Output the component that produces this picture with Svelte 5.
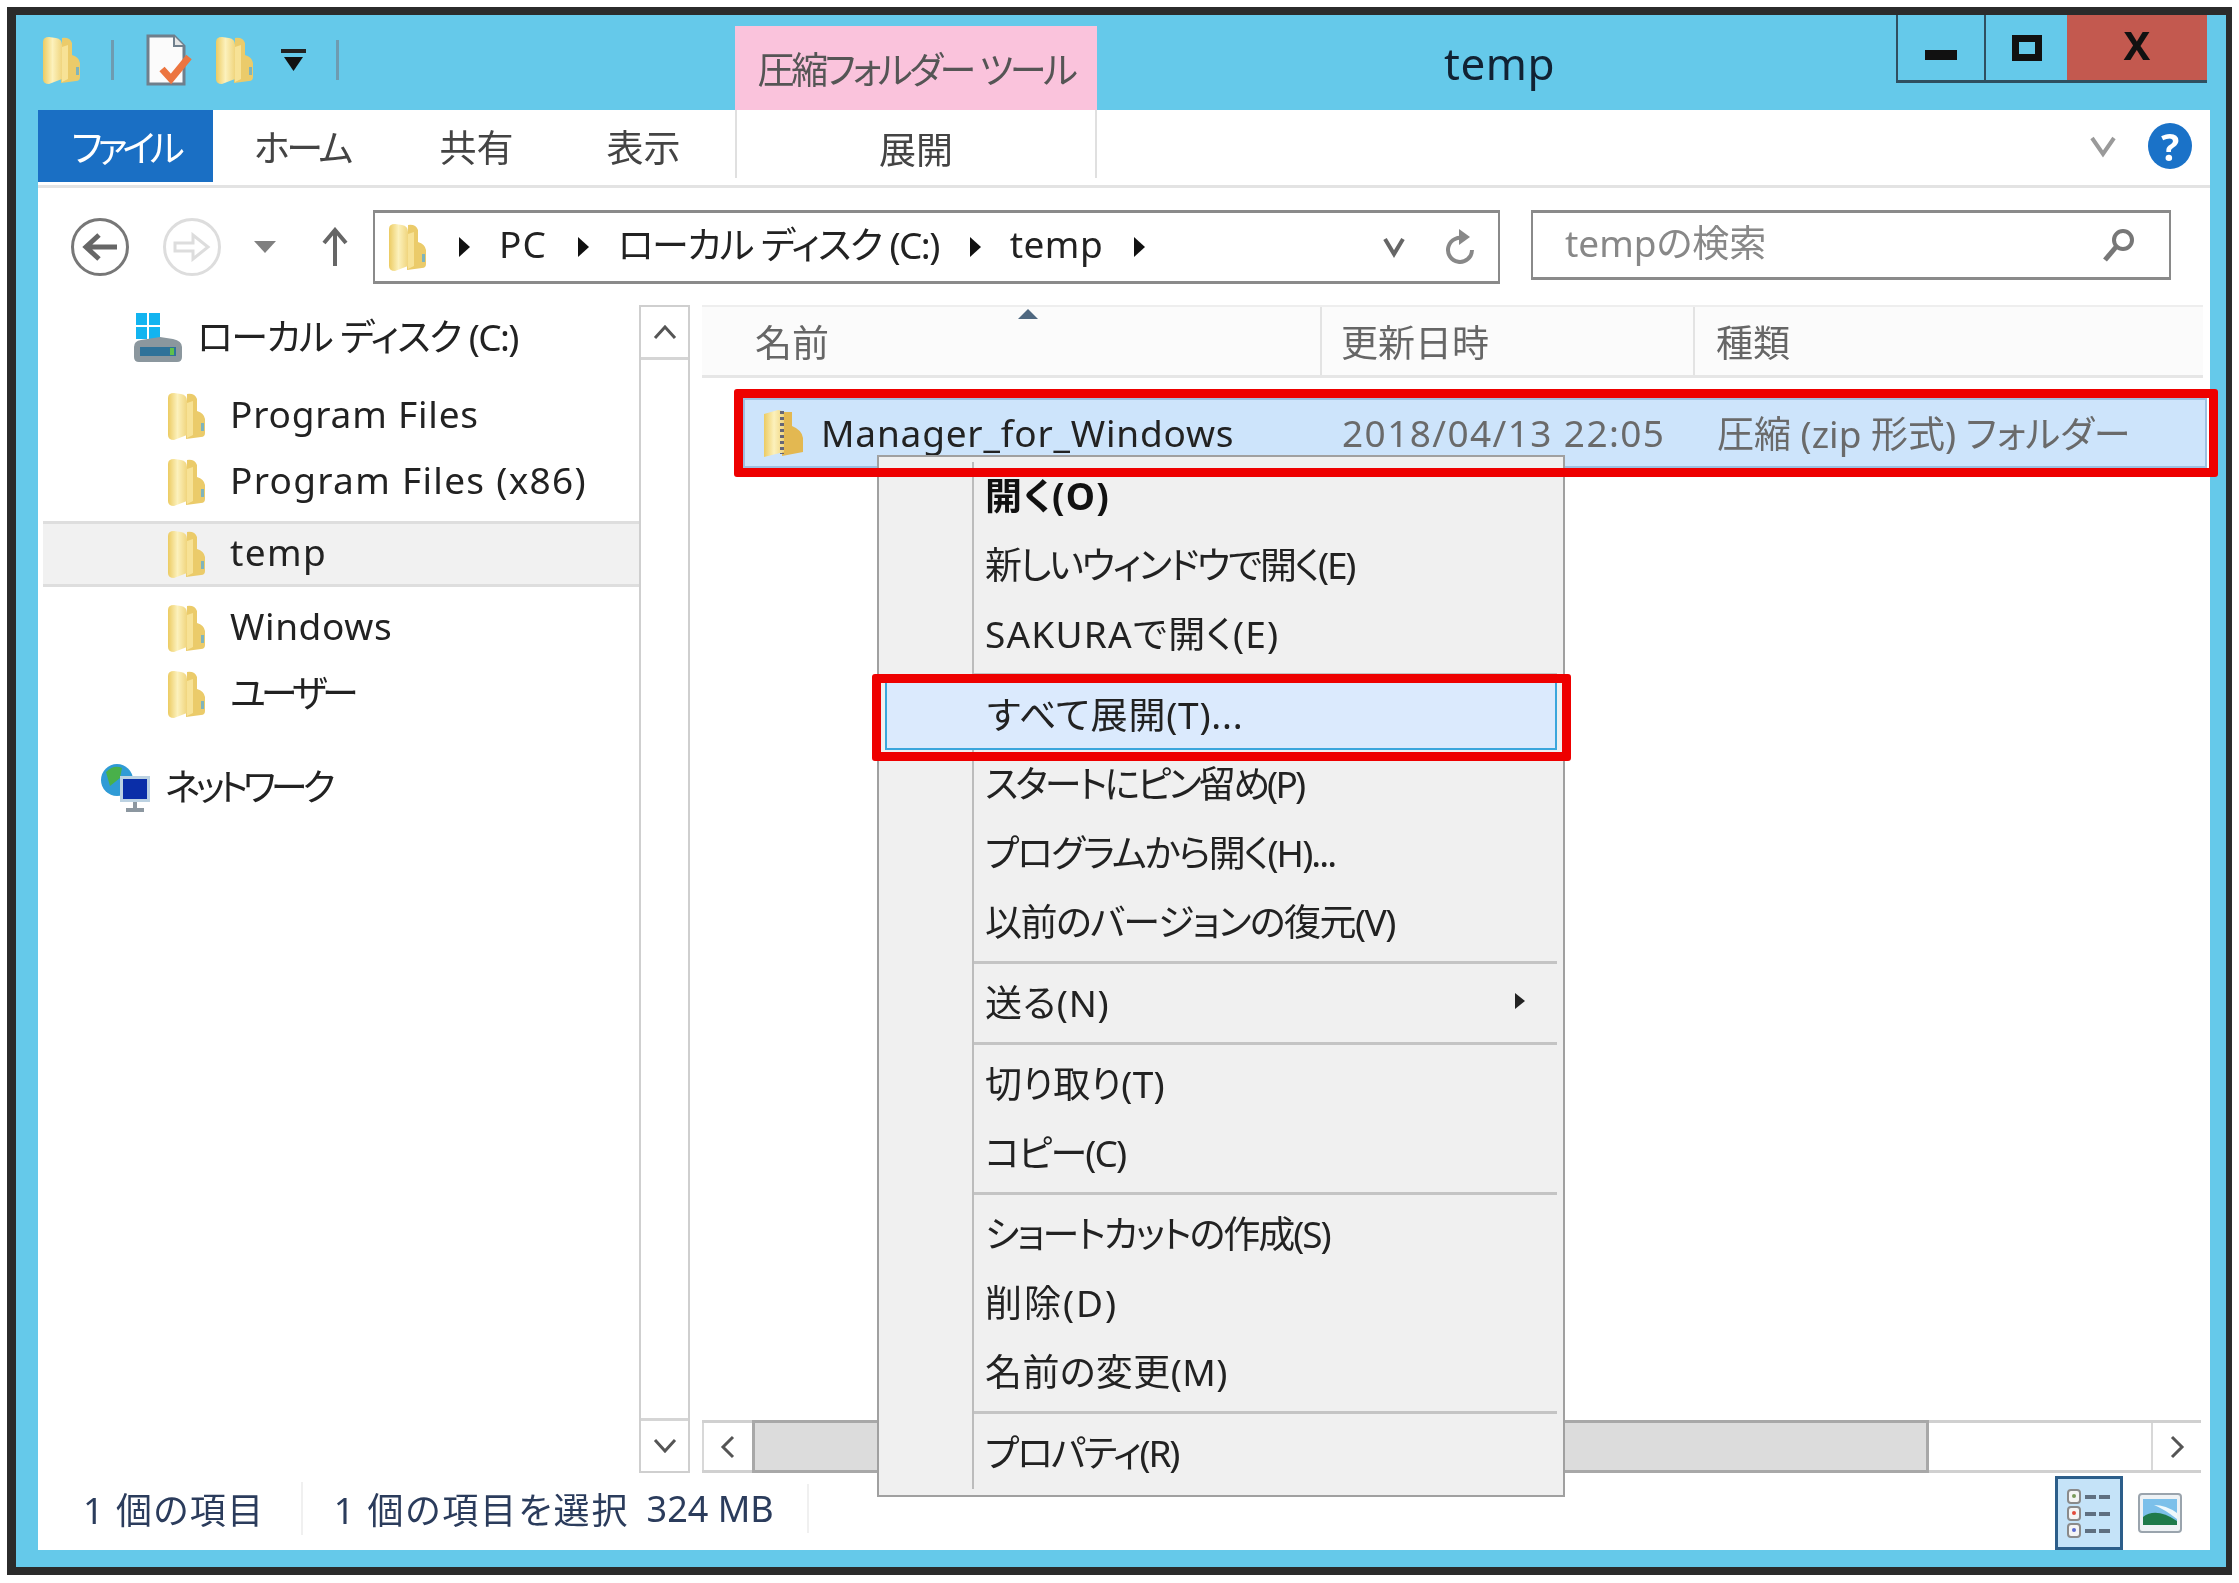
<script>
  const folders = [
    { name: 'Program Files', cls: 'first', ls: 0.8 },
    { name: 'Program Files (x86)', cls: '', ls: 1.3 },
    { name: 'temp', cls: 'sel', ls: 1.4 },
    { name: 'Windows', cls: '', ls: 0.6 },
    { name: 'ユーザー', cls: '', ls: -5 }
  ];

  // null = separator, ls = letter-spacing needed to match the old UI font widths
  const menu = [
    { t: '開く(O)', bold: true, ls: 1.2 },
    { t: '新しいウィンドウで開く(E)', ls: -2.2 },
    { t: 'SAKURAで開く(E)', ls: 1.2 },
    null,
    { t: 'すべて展開(T)...', hot: true, ls: 0.8 },
    { t: 'スタートにピン留め(P)', ls: -2.8 },
    { t: 'プログラムから開く(H)...', ls: -1.9 },
    { t: '以前のバージョンの復元(V)', ls: -1.5 },
    null,
    { t: '送る(N)', sub: true, ls: 0.8 },
    null,
    { t: '切り取り(T)', ls: 0.2 },
    { t: 'コピー(C)', ls: -1.9 },
    null,
    { t: 'ショートカットの作成(S)', ls: -2 },
    { t: '削除(D)', ls: 2 },
    { t: '名前の変更(M)', ls: 0.4 },
    null,
    { t: 'プロパティ(R)', ls: -2.1 }
  ];
</script>

{#snippet folder(w = 42, h = 50)}
  <svg class="ico" width={w} height={h} viewBox="0 0 40 50">
    <path d="M21 3 Q29 2 31 8 L31 20 Q38 22 39 28 L39 42 Q39 46 35 46 L20 48Z" fill="#ebcb6a" />
    <path d="M2 7 Q2 2 8 2 L15 3 Q21 4 21 10 L21 44 L8 49 Q2 49 2 44Z" fill="url(#fold)" />
    <path d="M21 12 L27 10 L27 44 L21 47Z" fill="#f7e296" />
    <rect x="35" y="32" width="3" height="8" fill="#7fb4bc" />
  </svg>
{/snippet}

{#snippet arrow()}
  <svg class="ico crumb" width="14" height="24" viewBox="0 0 14 24"><path d="M2 2 L13 12 L2 22Z" fill="#111" /></svg>
{/snippet}

<svg width="0" height="0" class="defs">
  <defs>
    <linearGradient id="fold" x1="0" y1="0" x2="1" y2="0">
      <stop offset="0" stop-color="#eccb62" />
      <stop offset="0.5" stop-color="#fcf1bc" />
      <stop offset="1" stop-color="#f0d57e" />
    </linearGradient>
  </defs>
</svg>

<div class="page">
  <div class="window">
    <div class="titlebar">
      <div class="qat">
        {@render folder(40, 50)}
        <span class="qsep"></span>
        <svg class="ico" width="46" height="52" viewBox="0 0 46 52">
          <path d="M2 2 H28 L38 12 V50 H2Z" fill="#fbfbfb" stroke="#6f7f8c" stroke-width="3" />
          <path d="M28 2 V12 H38" fill="#e6e6e6" stroke="#6f7f8c" stroke-width="2" />
          <path d="M16 35 L25 45 L43 23" fill="none" stroke="#ec7540" stroke-width="7" />
        </svg>
        <span class="spacer-a"></span>
        {@render folder(40, 50)}
        <svg class="ico dd" width="25" height="24" viewBox="0 0 25 24">
          <rect x="0" y="1" width="25" height="4" fill="#222" />
          <path d="M3 9 H22 L12.5 23Z" fill="#111" />
        </svg>
        <span class="qsep last"></span>
      </div>
      <div class="ctx-tab">圧縮フォルダー ツール</div>
      <div class="title">temp</div>
      <div class="winbtns">
        <div class="wb min"><span></span></div>
        <div class="wb max"><span></span></div>
        <div class="wb close">X</div>
      </div>
    </div>

    <div class="content">
      <div class="ribbon">
        <div class="tab file">ファイル</div>
        <div class="tab home">ホーム</div>
        <div class="tab share">共有</div>
        <div class="tab view">表示</div>
        <div class="tab extract">展開</div>
        <div class="ribbon-right">
          <svg class="ico" width="28" height="24" viewBox="0 0 28 24"><path d="M3 4 L14 20 L25 4" fill="none" stroke="#9a9a9a" stroke-width="4" /></svg>
          <div class="help">?</div>
        </div>
      </div>

      <div class="nav">
        <div class="circle back">
          <svg width="38" height="30" viewBox="0 0 38 30"><path d="M36 15 H6 M18 3 L5 15 L18 27" fill="none" stroke="#666" stroke-width="5" /></svg>
        </div>
        <div class="circle fwd">
          <svg width="38" height="30" viewBox="0 0 38 30"><path d="M2 11 H20 V3 L35 15 L20 27 V19 H2Z" fill="none" stroke="#ddd" stroke-width="3" /></svg>
        </div>
        <svg class="ico navdd" width="24" height="14" viewBox="0 0 24 14"><path d="M1 1 H23 L12 13Z" fill="#808080" /></svg>
        <svg class="ico up" width="28" height="40" viewBox="0 0 28 40"><path d="M14 39 V4 M3 16 L14 3 L25 16" fill="none" stroke="#666" stroke-width="4" /></svg>
        <div class="addr">
          {@render folder(42, 50)}
          {@render arrow()}
          <span class="c-pc">PC</span>
          {@render arrow()}
          <span class="c-disk">ローカル ディスク (C:)</span>
          {@render arrow()}
          <span class="c-temp">temp</span>
          {@render arrow()}
          <svg class="ico addr-chev" width="24" height="22" viewBox="0 0 24 22"><path d="M3 3 L12 18 L21 3" fill="none" stroke="#666" stroke-width="4" /></svg>
          <svg class="ico addr-ref" width="32" height="38" viewBox="0 0 32 38"><path d="M21 11 A12 12 0 1 0 28 22" fill="none" stroke="#888" stroke-width="4" /><path d="M15 1 L26 9 L15 17Z" fill="#888" /></svg>
        </div>
        <div class="search">
          <span>tempの検索</span>
          <svg class="ico" width="36" height="36" viewBox="0 0 36 36"><circle cx="22" cy="13" r="9" fill="none" stroke="#777" stroke-width="4" /><path d="M15 20 L4 33" stroke="#777" stroke-width="5" /></svg>
        </div>
      </div>

      <div class="main">
        <div class="tree">
          <div class="row disk">
            <svg class="ico" width="50" height="50" viewBox="0 0 50 50">
              <rect x="3" y="0" width="11" height="12" fill="#12b4f0" /><rect x="16" y="0" width="11" height="12" fill="#12b4f0" />
              <rect x="3" y="14" width="11" height="12" fill="#12b4f0" /><rect x="16" y="14" width="11" height="12" fill="#12b4f0" />
              <path d="M27 24 L40 26 Q49 28 49 34 V44 Q49 49 44 49 H6 Q1 49 1 44 V34 Q1 28 8 27Z" fill="#8b979e" />
              <rect x="7" y="34" width="36" height="9" fill="#2f7299" />
              <rect x="37" y="35" width="4" height="7" fill="#5fc04a" />
            </svg>
            <span class="t-disk">ローカル ディスク (C:)</span>
          </div>
          {#each folders as f}
            <div class="row fold {f.cls}">
              {@render folder(42, 50)}
              <span style="letter-spacing:{f.ls}px">{f.name}</span>
            </div>
          {/each}
          <div class="row network">
            <svg class="ico" width="52" height="52" viewBox="0 0 52 52">
              <circle cx="17" cy="18" r="16" fill="#2f9bd6" />
              <path d="M6 10 Q14 2 22 6 L20 16 L10 24Z" fill="#49b04a" />
              <rect x="20" y="14" width="30" height="26" fill="#bcd2e2" />
              <rect x="23" y="17" width="24" height="20" fill="#0a2ea8" />
              <path d="M33 40 H37 V46 H44 V50 H26 V46 H33Z" fill="#8c97a0" />
            </svg>
            <span class="t-net">ネットワーク</span>
          </div>
        </div>

        <div class="vscroll">
          <div class="sbtn">
            <svg width="24" height="14" viewBox="0 0 24 14"><path d="M2 13 L12 2 L22 13" fill="none" stroke="#555" stroke-width="3" /></svg>
          </div>
          <div class="vtrack"></div>
          <div class="sbtn">
            <svg width="24" height="14" viewBox="0 0 24 14"><path d="M2 1 L12 12 L22 1" fill="none" stroke="#555" stroke-width="3" /></svg>
          </div>
        </div>

        <div class="files">
          <div class="head">
            <div class="col c1">名前<svg class="sort" width="22" height="10" viewBox="0 0 22 10"><path d="M1 10 L11 0 L21 10Z" fill="#4f6880" /></svg></div>
            <div class="col c2">更新日時</div>
            <div class="col c3">種類</div>
          </div>
          <div class="list">
            <div class="filerow">
              <svg class="ico" width="42" height="50" viewBox="0 0 42 50">
                <path d="M20 4 L30 4 L30 18 Q40 22 41 30 L41 44 L20 48Z" fill="#e3b851" />
                <path d="M2 6 L16 2 Q22 2 22 8 L22 44 L2 49Z" fill="url(#fold)" />
                <path d="M20 3 V46" stroke="#667" stroke-width="4" stroke-dasharray="3 3" />
              </svg>
              <span class="fname">Manager_for_Windows</span>
              <span class="fdate">2018/04/13 22:05</span>
              <span class="ftype">圧縮 (zip 形式) フォルダー</span>
            </div>
          </div>
          <div class="hscroll">
            <div class="hbtn">
              <svg width="16" height="24" viewBox="0 0 16 24"><path d="M13 2 L3 12 L13 22" fill="none" stroke="#555" stroke-width="3" /></svg>
            </div>
            <div class="thumb"></div>
            <div class="hbtn right">
              <svg width="16" height="24" viewBox="0 0 16 24"><path d="M3 2 L13 12 L3 22" fill="none" stroke="#555" stroke-width="3" /></svg>
            </div>
          </div>
        </div>
      </div>

      <div class="status">
        <span class="s1">1 個の項目</span>
        <span class="s2">1 個の項目を選択</span>
        <span class="s3">324 MB</span>
        <div class="views">
          <div class="vbtn on">
            <svg width="44" height="52" viewBox="0 0 44 52">
              <g fill="#f4f4f4" stroke="#8a8a8a" stroke-width="2">
                <rect x="1" y="3" width="12" height="13" rx="3" /><rect x="1" y="20" width="12" height="13" rx="3" /><rect x="1" y="37" width="12" height="13" rx="3" />
              </g>
              <circle cx="7" cy="9" r="2" fill="#7a9a5a" /><circle cx="7" cy="26" r="2" fill="#e24a3a" /><circle cx="7" cy="43" r="2" fill="#5a6ad0" />
              <g fill="#5f6f80">
                <rect x="18" y="8" width="11" height="4" /><rect x="32" y="8" width="11" height="4" />
                <rect x="18" y="25" width="11" height="4" /><rect x="32" y="25" width="11" height="4" />
                <rect x="18" y="42" width="11" height="4" /><rect x="32" y="42" width="11" height="4" />
              </g>
            </svg>
          </div>
          <svg class="thumbview" width="44" height="40" viewBox="0 0 44 40">
            <rect x="1" y="1" width="42" height="38" rx="3" fill="#eef2f5" stroke="#9aa4ad" stroke-width="2" />
            <rect x="5" y="6" width="34" height="26" fill="#7cc0ea" />
            <path d="M5 24 Q18 14 39 28 V32 H5Z" fill="#1f7a4a" />
            <path d="M16 12 Q28 12 39 20 V26 Q26 16 16 12Z" fill="#eef8fc" />
          </svg>
        </div>
      </div>
    </div>
  </div>

  <div class="ctxmenu">
    <div class="mlist">
      {#each menu as m}
        {#if m === null}
          <div class="msep"></div>
        {:else}
          <div class="mitem" class:bold={m.bold} class:hot={m.hot}>
            <span style="letter-spacing:{m.ls}px">{m.t}</span>
            {#if m.sub}
              <svg class="subarrow" width="10" height="16" viewBox="0 0 10 16"><path d="M0 0 L10 8 L0 16Z" fill="#222" /></svg>
            {/if}
          </div>
        {/if}
      {/each}
    </div>
  </div>

  <div class="redbox one"></div>
  <div class="redbox two"></div>
</div>

<style>
  :global(body) {
    margin: 0;
    background: #fff;
  }

  .defs {
    position: absolute;
  }

  .page {
    position: relative;
    width: 2239px;
    height: 1583px;
    overflow: hidden;
    font-family: "Noto Sans", "Noto Sans CJK JP", sans-serif;
    font-feature-settings: "palt";
    font-size: 37px;
    color: #222;
    filter: blur(0.6px);
  }

  .ico {
    flex: none;
    display: block;
  }

  .window {
    box-sizing: border-box;
    width: 2225px;
    height: 1568px;
    margin: 7px 0 0 7px;
    border: solid #2b2b2b;
    border-width: 8px 6px 8px 9px;
    padding: 0 16px 17px 22px;
    background: #65c9ea;
    display: flex;
    flex-direction: column;
  }

  /* title bar */
  .titlebar {
    height: 95px;
    flex: none;
    display: flex;
    align-items: flex-start;
  }

  .qat {
    width: 697px;
    flex: none;
    display: flex;
    align-items: center;
    height: 80px;
    padding: 10px 0 0 3px;
    box-sizing: border-box;
  }

  .qsep {
    width: 3px;
    height: 40px;
    background: #6e9bb0;
    margin: 0 32px 0 30px;
    flex: none;
  }

  .qsep.last {
    margin: 0 0 0 30px;
  }

  .spacer-a {
    width: 22px;
    flex: none;
  }

  .dd {
    margin-left: 27px;
  }

  .ctx-tab {
    width: 362px;
    height: 84px;
    margin-top: 11px;
    flex: none;
    background: #fac3dc;
    color: #555;
    font-size: 37px;
    letter-spacing: -3.3px;
    display: flex;
    align-items: center;
    justify-content: center;
  }

  .title {
    flex: 1;
    text-align: center;
    font-size: 44px;
    letter-spacing: 0.5px;
    color: #123;
    line-height: 50px;
    padding: 23px 0 0 6px;
  }

  .winbtns {
    width: 311px;
    height: 68px;
    margin-right: 3px;
    flex: none;
    display: flex;
    border-bottom: 3px solid #2f4f60;
    box-sizing: border-box;
  }

  .wb {
    box-sizing: border-box;
    border-left: 2px solid #2f4f60;
    display: flex;
    align-items: center;
    justify-content: center;
  }

  .wb.min {
    width: 88px;
  }

  .wb.min span {
    width: 32px;
    height: 10px;
    background: #111;
    margin-top: 14px;
  }

  .wb.max {
    width: 83px;
  }

  .wb.max span {
    width: 30px;
    height: 26px;
    border: 7px solid #111;
    box-sizing: border-box;
  }

  .wb.close {
    flex: 1;
    border-left: 0;
    background: #c3594f;
    color: #111;
    font-weight: 700;
    font-size: 40px;
    padding-bottom: 7px;
  }

  /* white part */
  .content {
    flex: 1;
    min-height: 0;
    background: #fff;
    display: flex;
    flex-direction: column;
  }

  .ribbon {
    height: 78px;
    flex: none;
    box-sizing: border-box;
    border-bottom: 3px solid #e3e3e3;
    display: flex;
  }

  .tab {
    height: 72px;
    display: flex;
    align-items: center;
    justify-content: center;
    color: #444;
  }

  .tab.file {
    width: 175px;
    background: #1a6fc4;
    color: #fff;
    letter-spacing: -5px;
  }

  .tab.home {
    width: 178px;
    letter-spacing: -3.3px;
  }

  .tab.share {
    width: 171px;
  }

  .tab.view {
    width: 163px;
    margin-right: 10px;
  }

  .tab.extract {
    width: 358px;
    height: 60px;
    padding-top: 8px;
    box-sizing: content-box;
    border: solid #e0e0e0;
    border-width: 0 2px;
  }

  .ribbon-right {
    margin-left: auto;
    display: flex;
    align-items: center;
    gap: 31px;
    padding-right: 18px;
    height: 72px;
  }

  .help {
    width: 44px;
    height: 46px;
    border-radius: 50%;
    background: #1a72c8;
    color: #fff;
    font-weight: 700;
    font-size: 38px;
    line-height: 46px;
    text-align: center;
  }

  /* address row */
  .nav {
    height: 117px;
    flex: none;
    display: flex;
    align-items: center;
    padding-left: 33px;
  }

  .circle {
    box-sizing: border-box;
    width: 58px;
    height: 58px;
    border-radius: 50%;
    display: flex;
    align-items: center;
    justify-content: center;
    flex: none;
  }

  .circle.back {
    border: 3px solid #777;
  }

  .circle.fwd {
    border: 3px solid #ddd;
    margin-left: 34px;
  }

  .navdd {
    margin-left: 32px;
  }

  .up {
    margin-left: 44px;
  }

  .addr {
    box-sizing: border-box;
    width: 1127px;
    height: 74px;
    margin-left: 24px;
    border: 3px solid #8a8a8a;
    border-width: 3px 2px 3px 2px;
    display: flex;
    align-items: center;
    padding-left: 11px;
    color: #222;
  }

  .addr span,
  .search span {
    margin-bottom: 7px;
  }

  .crumb {
    margin-left: 29px;
  }

  .c-pc,
  .c-disk,
  .c-temp {
    margin-left: 28px;
  }

  .c-pc {
    letter-spacing: 1px;
  }

  .c-disk,
  .t-disk {
    letter-spacing: -1.6px;
  }

  .c-temp {
    letter-spacing: 0.5px;
  }

  .addr-chev {
    margin-left: auto;
    margin-right: 38px;
  }

  .addr-ref {
    margin-right: 22px;
  }

  .search {
    box-sizing: border-box;
    width: 640px;
    height: 70px;
    margin-left: 31px;
    margin-bottom: 4px;
    border: 3px solid #8a8a8a;
    border-width: 3px 2px;
    display: flex;
    align-items: center;
    justify-content: space-between;
    padding: 0 32px;
    color: #888;
  }

  /* main area */
  .main {
    flex: 1;
    min-height: 0;
    display: flex;
  }

  .tree {
    width: 601px;
    flex: none;
    display: flex;
    flex-direction: column;
  }

  .row {
    height: 66px;
    flex: none;
    display: flex;
    align-items: center;
    box-sizing: border-box;
  }

  .row span {
    margin-bottom: 6px;
  }

  .row.disk {
    padding-left: 95px;
    gap: 14px;
  }

  .row.fold {
    padding-left: 127px;
    gap: 23px;
  }

  .row.first {
    margin-top: 12px;
  }

  .row.sel {
    margin: 6px 0 8px 5px;
    padding-left: 122px;
    background: #f1f1f1;
    border: solid #dedede;
    border-width: 3px 0;
  }

  .row.network {
    padding-left: 62px;
    gap: 13px;
    margin-top: 28px;
  }

  .t-net {
    letter-spacing: -5px;
  }

  .vscroll {
    width: 51px;
    flex: none;
    display: flex;
    flex-direction: column;
    box-sizing: border-box;
    border: 2px solid #cfcfcf;
  }

  .sbtn {
    height: 50px;
    flex: none;
    display: flex;
    align-items: center;
    justify-content: center;
  }

  .sbtn:first-child {
    border-bottom: 3px solid #d5d5d5;
  }

  .sbtn:last-child {
    border-top: 3px solid #d5d5d5;
  }

  .vtrack {
    flex: 1;
  }

  .files {
    flex: 1;
    min-width: 0;
    margin-left: 12px;
    display: flex;
    flex-direction: column;
  }

  .head {
    height: 73px;
    flex: none;
    box-sizing: border-box;
    background: #fbfbfb;
    border-top: 2px solid #eee;
    border-bottom: 3px solid #e6e6e6;
    display: flex;
    color: #666;
    margin-right: 7px;
  }

  .col {
    box-sizing: border-box;
    display: flex;
    align-items: center;
    position: relative;
  }

  .c1 {
    width: 620px;
    padding-left: 53px;
    border-right: 2px solid #e3e3e3;
  }

  .sort {
    position: absolute;
    left: 315px;
    top: 2px;
  }

  .c2 {
    width: 373px;
    padding-left: 19px;
    border-right: 2px solid #e3e3e3;
  }

  .c3 {
    padding-left: 21px;
  }

  .list {
    flex: 1;
    min-height: 0;
  }

  .filerow {
    box-sizing: border-box;
    height: 70px;
    margin: 20px 3px 0 41px;
    background: #cde4fb;
    border: 2px solid #9dbfe0;
    display: flex;
    align-items: center;
    padding-left: 17px;
  }

  .filerow span {
    margin-bottom: 2px;
  }

  .fname {
    margin-left: 17px;
    width: 521px;
    flex: none;
    color: #222;
    letter-spacing: 0.8px;
  }

  .fdate {
    width: 375px;
    flex: none;
    color: #6a6a6a;
    letter-spacing: 1.4px;
  }

  .ftype {
    color: #6a6a6a;
  }

  .hscroll {
    height: 53px;
    flex: none;
    box-sizing: border-box;
    border: solid #d0d0d0;
    border-width: 3px 0;
    display: flex;
    margin-right: 9px;
  }

  .hbtn {
    width: 50px;
    flex: none;
    display: flex;
    align-items: center;
    justify-content: center;
    border-left: 2px solid #d8d8d8;
    box-sizing: border-box;
  }

  .hbtn.right {
    margin-left: auto;
  }

  .thumb {
    width: 1177px;
    flex: none;
    box-sizing: border-box;
    background: #dcdcdc;
    border: 3px solid #a8a8a8;
    margin: -3px 0;
  }

  /* status bar */
  .status {
    height: 77px;
    flex: none;
    display: flex;
    align-items: center;
    color: #2b3c5c;
    font-size: 36px;
    padding-left: 45px;
  }

  .status span {
    margin-bottom: 6px;
  }

  .s1 {
    letter-spacing: 1.5px;
    padding-right: 36px;
    border-right: 2px solid #f0f0f0;
  }

  .s2 {
    margin-left: 31px;
    letter-spacing: 2px;
  }

  .s3 {
    margin-left: 17px;
    padding-right: 33px;
    border-right: 2px solid #f0f0f0;
  }

  .views {
    margin-left: auto;
    display: flex;
    align-items: center;
    gap: 15px;
    padding-right: 28px;
    align-self: flex-end;
  }

  .vbtn {
    box-sizing: border-box;
    width: 68px;
    height: 74px;
    background: #c5e3f8;
    border: 3px solid #2c5e8a;
    display: flex;
    align-items: center;
    justify-content: center;
  }

  /* context menu */
  .ctxmenu {
    position: absolute;
    left: 877px;
    top: 455px;
    width: 688px;
    box-sizing: border-box;
    height: 1042px;
    background: #f0f0f0;
    border: 2px solid #a0a0a0;
    padding: 5px 6px 6px 93px;
  }

  .mlist {
    height: 100%;
    border-left: 2px solid #bcbcbc;
    display: flex;
    flex-direction: column;
  }

  .mitem {
    height: 69px;
    flex: none;
    box-sizing: border-box;
    display: flex;
    align-items: center;
    justify-content: space-between;
    padding: 0 32px 6px 11px;
    color: #222;
  }

  .bold {
    font-weight: 700;
    color: #111;
  }

  .hot {
    margin-left: -89px;
    padding-left: 100px;
    background: #dbeafd;
    border: 2px solid #3aa6dc;
  }

  .msep {
    height: 12px;
    flex: none;
    display: flex;
  }

  .msep::after {
    content: "";
    width: 100%;
    height: 3px;
    margin-top: 4px;
    background: #c4c4c4;
  }

  .redbox {
    position: absolute;
    box-sizing: border-box;
    border: 9px solid #ee0000;
    border-radius: 3px;
  }

  .redbox.one {
    left: 734px;
    top: 389px;
    width: 1484px;
    height: 88px;
  }

  .redbox.two {
    left: 872px;
    top: 674px;
    width: 699px;
    height: 87px;
  }
</style>
